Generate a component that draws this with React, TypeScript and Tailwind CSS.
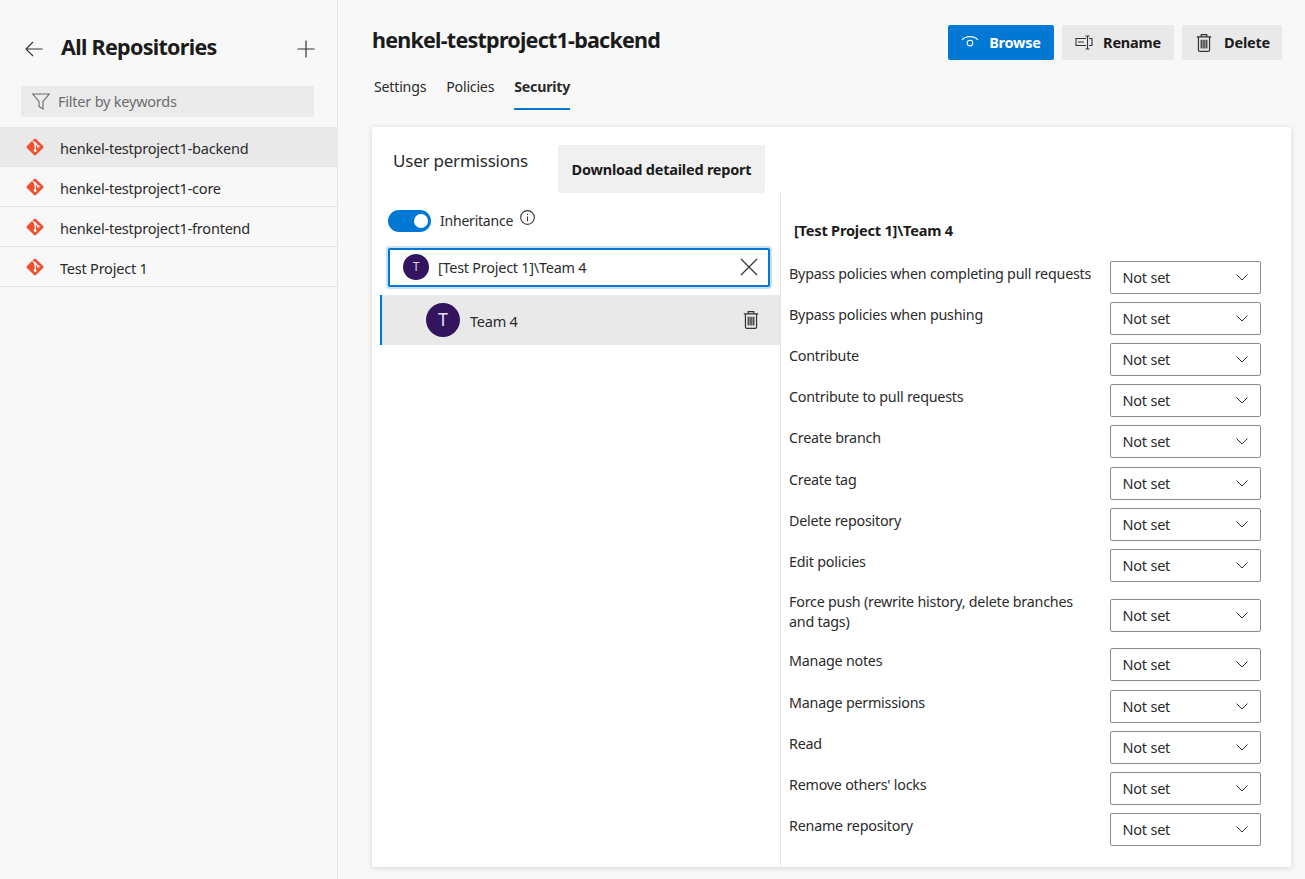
import React from "react";

const repos = ["henkel-testproject1-backend", "henkel-testproject1-core", "henkel-testproject1-frontend", "Test Project 1"];
const perms: [string, string, string][] = [
  ["Bypass policies when completing pull requests", "h-[41px]", ""],
  ["Bypass policies when pushing", "h-[41px]", ""],
  ["Contribute", "h-[41px]", ""],
  ["Contribute to pull requests", "h-[41px]", ""],
  ["Create branch", "h-[42px]", ""],
  ["Create tag", "h-[41px]", ""],
  ["Delete repository", "h-[41px]", ""],
  ["Edit policies", "h-[50px]", ""],
  ["Force push (rewrite history, delete branches and tags)", "h-[49px]", "tall"],
  ["Manage notes", "h-[42px]", ""],
  ["Manage permissions", "h-[41px]", ""],
  ["Read", "h-[41px]", ""],
  ["Remove others' locks", "h-[41px]", ""],
  ["Rename repository", "h-[41px]", ""],
];

function GitIcon() {
  return (
    <svg width="18" height="18" viewBox="0 0 18 18" className="shrink-0">
      <rect x="2.6" y="2.6" width="12.8" height="12.8" rx="1.4" transform="rotate(45 9 9)" fill="#f05133" />
      <path d="M6.6 2.8 L12.2 8.4 M9.2 5.6 V12.4" stroke="#fff" strokeWidth="1.2" fill="none" />
      <circle cx="9.2" cy="5.6" r="1.3" fill="#fff" />
      <circle cx="9.2" cy="12.6" r="1.4" fill="#fff" />
      <circle cx="12.2" cy="8.6" r="1.3" fill="#fff" />
    </svg>
  );
}

function Trash({ size = 18 }: { size?: number }) {
  return (
    <svg width={size} height={size} viewBox="0 0 18 18" fill="none" stroke="#333" strokeWidth="1.1" className="shrink-0">
      <path d="M2.5 3.5 H15.5 M6.5 3.5 V1.5 H11.5 V3.5" />
      <path d="M4 3.5 V15.2 Q4 16.5 5.3 16.5 H12.7 Q14 16.5 14 15.2 V3.5" />
      <path d="M6.5 6 V14 M8.2 6 V14 M9.8 6 V14 M11.5 6 V14" />
    </svg>
  );
}

function Chevron() {
  return (
    <svg width="12" height="7" viewBox="0 0 12 7" fill="none" stroke="#333" strokeWidth="1" className="shrink-0">
      <path d="M0.5 0.5 L6 6 L11.5 0.5" />
    </svg>
  );
}

function PermRow({ label, h, tall }: { label: string; h: string; tall: boolean }) {
  return (
    <div className={`flex items-start ${h}`}>
      <div className={`w-[329px] shrink-0 pl-[8px] pr-[12px] text-[14.3px] leading-[20px] text-[#2b2b2b] ${tall ? "-mt-[7px]" : "pt-[3px]"}`}>{label}</div>
      <div className="flex h-[33px] w-[151px] shrink-0 items-center justify-between rounded-[2px] border border-[#8a8a8a] bg-white pl-[11.5px] pr-[12px] text-[14.5px] text-[#2b2b2b]">
        <span className="pt-[2px]">Not set</span>
        <Chevron />
      </div>
    </div>
  );
}

export default function App() {
  return (
    <div className="flex h-[879px] w-[1305px] overflow-hidden bg-[#f8f8f8] font-['Noto_Sans','Open_Sans',sans-serif] text-[#201f1e] tracking-[-0.22px]">
      <aside className="flex h-full w-[338px] shrink-0 flex-col border-r border-[#e5e5e5]">
        <div className="flex h-[86px] items-start pl-[25px] pr-[22px] pt-[32px]">
          <svg width="18" height="16" viewBox="0 0 18 16" fill="none" stroke="#333" strokeWidth="1.1" className="mt-[9px] shrink-0">
            <path d="M17.5 8 H1 M8 1 L1 8 L8 15" />
          </svg>
          <h1 className="ml-[18px] text-[21.5px] font-bold leading-[30px] tracking-[-0.7px] text-[#1b1b1b]">All Repositories</h1>
          <svg width="18" height="18" viewBox="0 0 18 18" fill="none" stroke="#333" strokeWidth="1.2" className="ml-auto mt-[8px] shrink-0">
            <path d="M9 0.5 V17.5 M0.5 9 H17.5" />
          </svg>
        </div>
        <div className="ml-[21px] mr-[23px] flex h-[31px] items-center rounded-[2px] bg-[#ebebeb] pl-[11px] text-[14.5px] text-[#6b6b6b]">
          <svg width="18" height="17" viewBox="0 0 18 17" fill="none" stroke="#6b6b6b" strokeWidth="1.1" className="shrink-0">
            <path d="M0.8 1 H17.2 L11 8.5 V16 L7 13.5 V8.5 Z" />
          </svg>
          <span className="ml-[8px]">Filter by keywords</span>
        </div>
        <ul className="mt-[10px]">
          {repos.map((r, i) => (
            <li key={r} className={`flex h-[40px] items-center border-b border-[#e3e3e3] pl-[26px] pt-[4px] text-[14.5px] ${i === 0 ? "bg-[#e9e9e9]" : ""}`}>
              <span className="-mt-[3px]"><GitIcon /></span>
              <span className="ml-[16px] text-[#2b2b2b]">{r}</span>
            </li>
          ))}
        </ul>
      </aside>

      <main className="flex min-w-0 flex-1 flex-col pl-[34px] pr-[14px]">
        <div className="flex h-[60px] items-start pr-[9px] pt-[25px]">
          <h2 className="text-[21.5px] font-bold leading-[30px] tracking-[-0.77px] text-[#1b1b1b]">henkel-testproject1-backend</h2>
          <div className="ml-auto flex gap-[8px] text-[14.5px] font-bold">
            <button className="flex h-[35px] w-[106px] items-center justify-center gap-[10px] rounded-[2px] bg-[#0078d4] text-white">
              <svg width="18" height="14" viewBox="0 0 18 14" fill="none" stroke="#fff" strokeWidth="1.1" className="-mt-[1px] shrink-0">
                <path d="M1 5 C4.5 0.5 13.5 0.5 17 5" />
                <circle cx="9" cy="8" r="2.8" />
              </svg>
              Browse
            </button>
            <button className="flex h-[35px] w-[112px] items-center justify-center gap-[10px] rounded-[2px] bg-[#e9e9e9] text-[#1b1b1b]">
              <svg width="18" height="15" viewBox="0 0 18 15" fill="none" stroke="#333" strokeWidth="1.1" className="shrink-0">
                <path d="M11 3.5 H1 V10.5 H11 M14 3.5 H17 V10.5 H14 M12.5 1 V14 M10.5 1 H14.5 M10.5 14 H14.5 M3 7 H9" />
              </svg>
              Rename
            </button>
            <button className="flex h-[35px] w-[100px] items-center justify-center gap-[10px] rounded-[2px] bg-[#e9e9e9] text-[#1b1b1b]">
              <Trash size={20} />
              Delete
            </button>
          </div>
        </div>

        <nav className="flex h-[42px] items-start gap-[20px] pl-[2px] pt-[15px] text-[14.2px] text-[#2b2b2b]">
          <span className="leading-[24px]">Settings</span>
          <span className="leading-[24px]">Policies</span>
          <span className="relative h-[25px] font-bold leading-[24px]">
            Security
            <span className="absolute -bottom-[10px] left-0 right-0 h-[2px] bg-[#0078d4]" />
          </span>
        </nav>

        <section className="mt-[24.5px] flex h-[740px] flex-col rounded-[2px] bg-white shadow-[0_1px_6px_rgba(0,0,0,0.14)]">
          <div className="flex h-[66px] shrink-0 items-start pl-[21px] pt-[18px]">
            <span className="w-[165px] shrink-0 pt-[1px] text-[17px] leading-[30px] text-[#2b2b2b]">User permissions</span>
            <button className="h-[48px] w-[207px] rounded-[2px] bg-[#f0f0f0] pt-[3px] text-[14.5px] font-bold text-[#1b1b1b]">Download detailed report</button>
          </div>
          <div className="flex min-h-0 flex-1">
            <div className="w-[409px] shrink-0 border-r border-[#e5e5e5] pl-[8px]">
              <div className="flex h-[55px] items-start pl-[8px] pt-[16px] text-[14px]">
                <span className="relative mt-[1px] h-[22px] w-[43px] shrink-0 rounded-full bg-[#0078d4]">
                  <span className="absolute right-[3px] top-[4px] h-[14px] w-[14px] rounded-full bg-white" />
                </span>
                <span className="ml-[9px] pt-[1px] text-[#2b2b2b]">Inheritance</span>
                <svg width="15" height="15" viewBox="0 0 14 14" fill="none" stroke="#333" strokeWidth="1" className="ml-[7px] mt-[1px] shrink-0">
                  <circle cx="7" cy="7" r="6.4" />
                  <path d="M7 6 V10.5 M7 3.4 V4.6" />
                </svg>
              </div>
              <div className="ml-[8px] flex h-[39px] w-[382px] items-center rounded-[2px] border-2 border-[#0078d4] bg-white pl-[13px] pr-[10px] text-[14.4px] shadow-[0_0_0_2px_#c7e0f4]">
                <span className="flex h-[26px] w-[26px] shrink-0 items-center justify-center rounded-full bg-[#32145f] text-[12px] text-[#d8d0e6]">T</span>
                <span className="ml-[9px] pt-[2px] text-[#2b2b2b]">[Test Project 1]\Team 4</span>
                <svg width="18" height="18" viewBox="0 0 18 18" fill="none" stroke="#333" strokeWidth="1.2" className="ml-auto shrink-0">
                  <path d="M1 1 L17 17 M17 1 L1 17" />
                </svg>
              </div>
              <div className="mt-[8px] flex h-[50px] items-center border-l-2 border-[#0078d4] bg-[#e9e9e9] pl-[44px] pr-[19px] text-[14.5px]">
                <span className="flex h-[34px] w-[34px] shrink-0 items-center justify-center rounded-full bg-[#32145f] text-[18px] text-[#e6e0ee]">T</span>
                <span className="ml-[10px] pt-[4px] text-[#2b2b2b]">Team 4</span>
                <span className="ml-auto"><Trash size={20} /></span>
              </div>
            </div>
            <div className="min-w-0 flex-1">
              <div className="h-[68px] pl-[13px] pt-[25px] text-[14.6px] font-bold leading-[24px] text-[#1b1b1b]">[Test Project 1]\Team 4</div>
              {perms.map(([label, h, t]) => (
                <PermRow key={label} label={label} h={h} tall={t === "tall"} />
              ))}
            </div>
          </div>
        </section>
      </main>
    </div>
  );
}
